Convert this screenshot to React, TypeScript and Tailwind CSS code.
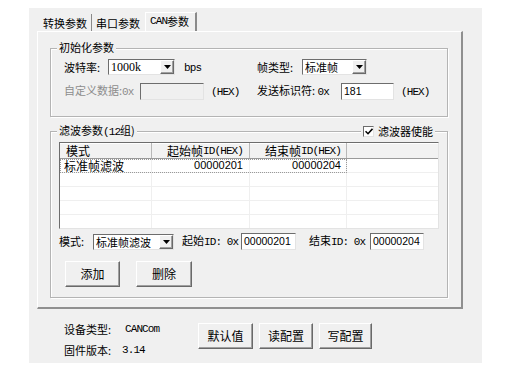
import React from "react";

function M({ children }: { children: React.ReactNode }) {
  return (
    <span className="font-['Liberation_Mono',monospace] text-[11px] tracking-[-0.9px]">
      {children}
    </span>
  );
}

function Arrow() {
  return (
    <svg width="7" height="4" viewBox="0 0 7 4">
      <polygon points="0,0 7,0 3.5,4" fill="#000" />
    </svg>
  );
}

function Combo({ className, children }: { className: string; children: React.ReactNode }) {
  return (
    <div
      className={`flex h-[16px] items-stretch bg-white border-t border-l border-[#6d6d6d] border-r border-b border-r-[#e3e3e3] border-b-[#e3e3e3] ${className}`}
    >
      <div className="flex-1 flex items-center pl-[2px] overflow-hidden whitespace-nowrap leading-[14px]">
        {children}
      </div>
      <div className="w-[14px] flex items-center justify-center bg-[#f0f0f0] border-t border-l border-white border-r border-b border-r-[#696969] border-b-[#696969] shadow-[inset_-1px_-1px_0_#a0a0a0]">
        <Arrow />
      </div>
    </div>
  );
}

function Field({ className, children }: { className: string; children?: React.ReactNode }) {
  return (
    <div
      className={`h-[17px] flex items-center pl-[2px] border-t border-l border-[#6d6d6d] border-r border-b border-r-[#e3e3e3] border-b-[#e3e3e3] font-['Liberation_Sans',sans-serif] text-[10.5px] leading-[13px] ${className}`}
    >
      {children}
    </div>
  );
}

function Btn({ className, children }: { className: string; children: React.ReactNode }) {
  return (
    <div
      className={`h-[26px] flex items-center justify-center bg-[#f0f0f0] border-t border-l border-white border-r border-b border-r-[#696969] border-b-[#696969] shadow-[inset_-1px_-1px_0_#a0a0a0] text-[12px] leading-[14px] ${className}`}
    >
      {children}
    </div>
  );
}

function Group({
  title,
  className,
  children,
  extra,
}: {
  title: React.ReactNode;
  className: string;
  children: React.ReactNode;
  extra?: React.ReactNode;
}) {
  return (
    <div
      className={`relative w-[398px] border border-[#b4b4b4] shadow-[1px_1px_0_#ffffff,inset_1px_1px_0_#ffffff] ${className}`}
    >
      <span className="absolute left-[6px] top-[-9px] px-[2px] bg-[#f0f0f0] leading-[14px] whitespace-nowrap">
        {title}
      </span>
      {extra}
      {children}
    </div>
  );
}

function ListRow({ first }: { first?: boolean }) {
  return (
    <div className="relative flex h-[14px] shrink-0 border-b border-[#efefef] text-[12px] leading-[13px]">
      <div className="w-[92px] pl-[4px] border-r border-[#efefef] flex items-center whitespace-nowrap">
        {first ? "标准帧滤波" : ""}
      </div>
      <div className="w-[98px] pr-[6px] border-r border-[#efefef] flex items-center justify-end font-['Liberation_Sans',sans-serif] text-[11px]">
        {first ? "00000201" : ""}
      </div>
      <div className="w-[97px] pr-[5px] border-r border-[#efefef] flex items-center justify-end font-['Liberation_Sans',sans-serif] text-[11px]">
        {first ? "00000204" : ""}
      </div>
      <div className="flex-1" />
      {first ? (
        <div className="absolute left-0 top-0 w-[287px] h-[14px] border border-dotted border-[#9a9a9a]" />
      ) : null}
    </div>
  );
}

export default function App() {
  return (
    <div className="w-[528px] h-[367px] bg-white pt-[8px] pl-[29px] font-['Noto_Sans_CJK_SC',sans-serif] text-[11px] text-black">
      <div className="w-[453px] h-[355px] bg-[#f0f0f0] flex flex-col">
        {/* Tabs */}
        <div className="h-[23px] flex items-end pl-[10px] shrink-0">
          <div className="w-[53px] h-[17px] pl-[4px] flex items-center border-r border-[#8a8a8a] leading-[14px] whitespace-nowrap">
            转换参数
          </div>
          <div className="w-[53px] h-[17px] pl-[4px] flex items-center leading-[14px] whitespace-nowrap">
            串口参数
          </div>
          <div className="w-[52px] h-[19px] pl-[4px] pb-[3px] flex items-center border-t border-l border-white border-r-2 border-r-[#8a8a8a] leading-[14px] whitespace-nowrap">
            <M>CAN</M>参数
          </div>
        </div>

        {/* Panel */}
        <div className="ml-[8px] w-[426px] pt-[16px] pl-[12px] pb-[9px] border-t border-l border-white border-r-2 border-b-2 border-r-[#8f8f8f] border-b-[#8f8f8f] shrink-0">
          <Group title="初始化参数" className="pt-[10px] pl-[13px] pb-[16px]">
            <div className="grid grid-cols-[193px_1fr]">
              <div className="h-[16px] flex items-center">
                <span className="w-[44px] whitespace-nowrap">波特率:</span>
                <Combo className="w-[67px]">
                  <span className="font-['Liberation_Serif',serif] text-[12px]">1000k</span>
                </Combo>
                <span className="ml-[9px]">
                  <M>bps</M>
                </span>
              </div>
              <div className="h-[16px] flex items-center">
                <span className="w-[45px] whitespace-nowrap">帧类型:</span>
                <Combo className="w-[65px]">标准帧</Combo>
              </div>
              <div className="h-[17px] mt-[8px] flex items-center">
                <span className="w-[76px] whitespace-nowrap text-[#8d8d8d]">
                  自定义数据:<M>0x</M>
                </span>
                <Field className="w-[64px] bg-[#f0f0f0]" />
                <span className="ml-[7px]">
                  <M>(HEX)</M>
                </span>
              </div>
              <div className="h-[17px] mt-[8px] flex items-center">
                <span className="w-[84px] whitespace-nowrap">
                  发送标识符: <M>0x</M>
                </span>
                <Field className="w-[53px] bg-white">181</Field>
                <span className="ml-[7px]">
                  <M>(HEX)</M>
                </span>
              </div>
            </div>
          </Group>

          <Group
            title={
              <>
                滤波参数<M>(12</M>组)
              </>
            }
            className="mt-[14px] pt-[10px] pl-[8px] pb-[10px]"
            extra={
              <div className="absolute left-[310px] top-[-8px] h-[14px] pl-[2px] pr-[2px] bg-[#f0f0f0] flex items-center gap-[4px]">
                <div className="w-[11px] h-[11px] bg-white border-t border-l border-[#6d6d6d] border-r border-b border-r-[#e3e3e3] border-b-[#e3e3e3] flex items-center justify-center">
                  <svg width="8" height="7" viewBox="0 0 8 7">
                    <polyline points="0.5,3.2 3,5.7 7.5,0.8" fill="none" stroke="#000" strokeWidth="1.6" />
                  </svg>
                </div>
                <span className="leading-[14px] whitespace-nowrap">滤波器使能</span>
              </div>
            }
          >
            {/* List view */}
            <div className="w-[380px] h-[87px] flex flex-col overflow-hidden bg-white border-t border-l border-[#6d6d6d] border-r border-b border-r-[#e3e3e3] border-b-[#e3e3e3]">
              <div className="flex h-[16px] shrink-0 bg-[#f2f2f2] border-b border-[#9a9a9a] shadow-[inset_0_1px_0_#ffffff] text-[12px] leading-[14px]">
                <div className="w-[92px] pl-[6px] border-r border-[#b8b8b8] flex items-center">模式</div>
                <div className="w-[98px] pr-[6px] border-r border-[#b8b8b8] flex items-center justify-end whitespace-nowrap">
                  起始帧<M>ID(HEX)</M>
                </div>
                <div className="w-[97px] pr-[5px] border-r border-[#b8b8b8] flex items-center justify-end whitespace-nowrap">
                  结束帧<M>ID(HEX)</M>
                </div>
                <div className="flex-1" />
              </div>
              <ListRow first />
              <ListRow />
              <ListRow />
              <ListRow />
              <ListRow />
            </div>

            {/* Filter edit row */}
            <div className="h-[17px] mt-[4px] flex items-center">
              <span className="w-[34px] whitespace-nowrap">模式:</span>
              <Combo className="w-[81px]">标准帧滤波</Combo>
              <span className="ml-[8px] w-[59px] whitespace-nowrap">
                起始<M>ID: 0x</M>
              </span>
              <Field className="w-[55px] bg-white">00000201</Field>
              <span className="ml-[13px] w-[61px] whitespace-nowrap">
                结束<M>ID: 0x</M>
              </span>
              <Field className="w-[54px] bg-white">00000204</Field>
            </div>

            <div className="flex gap-[16px] mt-[11px] ml-[6px]">
              <Btn className="w-[55px]">添加</Btn>
              <Btn className="w-[56px]">删除</Btn>
            </div>
          </Group>
        </div>

        {/* Bottom area */}
        <div className="flex pl-[35px] pt-[10px]">
          <div className="w-[134px] flex flex-col">
            <div className="h-[21px] flex items-center">
              <span className="w-[61px] whitespace-nowrap">设备类型:</span>
              <M>CANCom</M>
            </div>
            <div className="h-[21px] flex items-center">
              <span className="w-[58px] whitespace-nowrap">固件版本:</span>
              <M>3.14</M>
            </div>
          </div>
          <div className="flex gap-[6px] mt-[4px]">
            <Btn className="w-[55px]">默认值</Btn>
            <Btn className="w-[54px]">读配置</Btn>
            <Btn className="w-[53px]">写配置</Btn>
          </div>
        </div>
      </div>
    </div>
  );
}
